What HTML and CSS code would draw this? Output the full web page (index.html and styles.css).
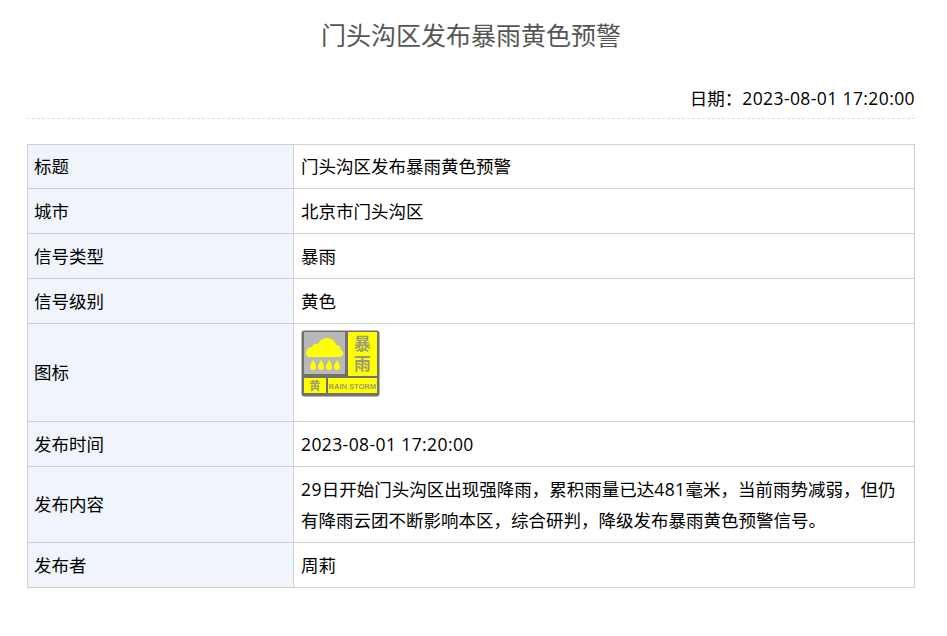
FILE: index.html
```html
<!DOCTYPE html>
<html lang="zh-CN">
<head>
<meta charset="utf-8">
<title>门头沟区发布暴雨黄色预警</title>
<link rel="stylesheet" href="styles.css">
</head>
<body>
<main class="page">
  <h1 class="title">门头沟区发布暴雨黄色预警</h1>
  <div class="date">日期：<span class="num">2023-08-01 17:20:00</span></div>
  <table class="info">
    <tr class="first-row"><th>标题</th><td>门头沟区发布暴雨黄色预警</td></tr>
    <tr><th>城市</th><td>北京市门头沟区</td></tr>
    <tr><th>信号类型</th><td>暴雨</td></tr>
    <tr><th>信号级别</th><td>黄色</td></tr>
    <tr class="icon-row"><th>图标</th><td>
      <svg class="signal" width="80" height="67" viewBox="0 0 80 67">
        <rect x="0.5" y="0.5" width="78" height="66" rx="3" fill="#707070"/>
        <rect x="3" y="2" width="41" height="42" fill="#b8b8b8"/>
        <rect x="47" y="2" width="29" height="44" fill="#ffff00"/>
        <rect x="3" y="48" width="22" height="15" fill="#ffff00"/>
        <rect x="27" y="48" width="49" height="15" fill="#ffff00"/>
        <path d="M6 26c-2-4 0-9 5-9 1-3 3-4 6-3 2-4 5-6 9-6 5 0 8 3 9 7 3 0 5 2 5 5 2 1 3 3 2 5-1 2-3 2-5 2H10c-2 0-3 0-4-1z" fill="#ffff00"/>
        <path d="M12 30c2 3 3 5 3 7a3 3 0 0 1-6 0c0-2 1-4 3-7zM20 30c2 3 3 5 3 7a3 3 0 0 1-6 0c0-2 1-4 3-7zM28 30c2 3 3 5 3 7a3 3 0 0 1-6 0c0-2 1-4 3-7zM36 30c2 3 3 5 3 7a3 3 0 0 1-6 0c0-2 1-4 3-7z" fill="#ffff00"/>
        <text class="sig-cn" x="61.500" y="20" text-anchor="middle">暴</text>
        <text class="sig-cn" x="61.500" y="40" text-anchor="middle">雨</text>
        <text class="sig-small" x="14" y="60" text-anchor="middle">黄</text>
        <text class="sig-en" x="51.500" y="58.500" text-anchor="middle">RAIN STORM</text>
      </svg>
    </td></tr>
    <tr><th>发布时间</th><td><span class="num">2023-08-01 17:20:00</span></td></tr>
    <tr class="text-row"><th>发布内容</th><td><span class="num">29</span>日开始门头沟区出现强降雨，累积雨量已达<span class="num">481</span>毫米，当前雨势减弱，但仍有降雨云团不断影响本区，综合研判，降级发布暴雨黄色预警信号。</td></tr>
    <tr><th>发布者</th><td>周莉</td></tr>
  </table>
</main>
</body>
</html>
```
FILE: styles.css
```css
html, body {
  margin: 0;
  padding: 0;
  background: #fff;
}
body {
  font-family: "Noto Sans CJK SC", "Noto Sans", sans-serif;
  color: #000;
  font-size: 17.5px;
}
.page {
  padding: 0 32px 0 27px;
  height: 636px;
  box-sizing: border-box;
  overflow: hidden;
}
.title {
  margin: 0;
  padding-top: 14px;
  text-align: center;
  font-size: 25px;
  font-weight: 400;
  line-height: 40px;
  color: #555;
}
.date {
  margin-top: 28px;
  height: 36px;
  line-height: 31px;
  text-align: right;
  border-bottom: 1px dashed #ddd;
}
.num {
  font-family: "Open Sans", "Noto Sans", sans-serif;
  letter-spacing: 0.4px;
  line-height: 1;
}
.info {
  margin-top: 25px;
  width: 888px;
  border-collapse: collapse;
  table-layout: fixed;
}
.info th, .info td {
  border: 1px solid #d0d0d0;
  padding: 0 7px 2px;
  height: 42px;
  font-weight: 400;
  text-align: left;
  line-height: 31px;
}
.info th {
  width: 252px;
  padding-left: 6px;
  background: #f0f5fc;
}
.info .first-row th, .info .first-row td {
  height: 41px;
}
.info .icon-row th {
  height: 95px;
}
.info .icon-row td {
  height: 91px;
  vertical-align: top;
  padding-top: 6px;
  padding-bottom: 0;
}
.info .text-row td {
  padding-top: 6px;
  padding-bottom: 7px;
}
.signal {
  display: block;
  filter: blur(0.5px);
}
.sig-cn {
  font-size: 17px;
  font-weight: 700;
  fill: #9a9a78;
}
.sig-small {
  font-size: 11px;
  font-weight: 700;
  fill: #9a9a78;
}
.sig-en {
  font-family: "Liberation Sans", sans-serif;
  font-size: 7.500px;
  font-weight: 700;
  fill: #9a9a78;
}
```
